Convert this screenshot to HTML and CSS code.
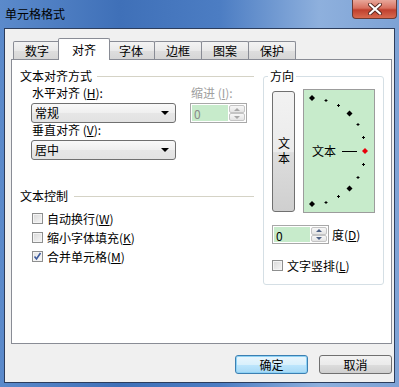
FILE: index.html
```html
<!DOCTYPE html>
<html lang="zh-CN">
<head>
    <meta charset="UTF-8">
    <title>单元格格式</title>
    <link rel="stylesheet" href="styles.css">
</head>
<body>
<div class="window">
    <div class="titlebar">
        <span class="title">单元格格式</span>
        <span class="close">
            <svg width="14" height="12" viewBox="0 0 14 12">
                <path d="M2 1.5 L12 10.5 M12 1.5 L2 10.5" stroke="#5a2a22" stroke-width="4" stroke-linecap="round"/>
                <path d="M2 1.5 L12 10.5 M12 1.5 L2 10.5" stroke="#fff" stroke-width="2.2" stroke-linecap="round"/>
            </svg>
        </span>
    </div>

    <div class="client">
        <div class="tabs">
            <span class="tab">数字</span>
            <span class="tab active">对齐</span>
            <span class="tab">字体</span>
            <span class="tab">边框</span>
            <span class="tab">图案</span>
            <span class="tab">保护</span>
        </div>

        <div class="panel">
            <div class="left">
                <div class="section"><span>文本对齐方式</span><i class="rule"></i></div>
                <div class="align-block">
                    <div class="col-main">
                        <div class="lbl">水平对齐 (<u>H</u>):</div>
                        <div class="select">常规<i class="arrow"></i></div>
                        <div class="lbl lbl-2">垂直对齐 (<u>V</u>):</div>
                        <div class="select">居中<i class="arrow"></i></div>
                    </div>
                    <div class="col-indent">
                        <div class="lbl disabled">缩进 (<u>I</u>):</div>
                        <div class="spin disabled">
                            <span class="spin-val">0</span>
                            <span class="spin-btns"><i class="up"></i><i class="down"></i></span>
                        </div>
                    </div>
                </div>

                <div class="section section-2"><span>文本控制</span><i class="rule"></i></div>
                <div class="checks">
                    <label class="check"><span class="box"></span>自动换行(<u>W</u>)</label>
                    <label class="check"><span class="box"></span>缩小字体填充(<u>K</u>)</label>
                    <label class="check"><span class="box checked">
                        <svg width="9" height="9" viewBox="0 0 9 9"><path d="M1.5 4.5 L3.5 7 L7.5 1" fill="none" stroke="#3d5a9c" stroke-width="1.6"/></svg>
                    </span>合并单元格(<u>M</u>)</label>
                </div>
            </div>

            <fieldset class="orient">
                <legend>方向</legend>
                <div class="orient-top">
                    <div class="vbtn"><span class="vtext">文本</span></div>
                    <svg class="dial" width="70" height="122" viewBox="0 0 70 122">
                        <polygon points="8,5 11,8 8,11 5,8"/>
                        <path d="M20.5 10.5h3M22 9v3 M33 15.5h3M34.5 14v3 M52.5 34.5h3M54 33v3 M58 47.5h3M59.5 46v3 M58 74.5h3M59.5 73v3 M52.5 87.5h3M54 86v3 M33 106.5h3M34.5 105v3 M20.5 112.5h3M22 111v3" stroke="#000" stroke-width="1"/>
                        <polygon points="45.5,20.5 48.5,23.5 45.5,26.5 42.5,23.5"/>
                        <polygon points="45.5,95.5 48.5,98.5 45.5,101.5 42.5,98.5"/>
                        <polygon points="8,111 11,114 8,117 5,114"/>
                        <polygon points="61,58 64,61 61,64 58,61" fill="#e8000b"/>
                        <text x="8" y="65.5" font-size="12">文本</text>
                        <path d="M38 61.5h15" stroke="#000" stroke-width="1"/>
                    </svg>
                </div>
                <div class="deg-row">
                    <div class="spin">
                        <span class="spin-val">0</span>
                        <span class="spin-btns"><i class="up"></i><i class="down"></i></span>
                    </div>
                    <span class="deg-lbl">度(<u>D</u>)</span>
                </div>
                <label class="check vert"><span class="box"></span>文字竖排(<u>L</u>)</label>
            </fieldset>
        </div>

        <div class="buttons">
            <button class="btn default">确定</button>
            <button class="btn">取消</button>
        </div>
    </div>
</div>
</body>
</html>
```

FILE: styles.css
```css
body { margin: 0; font-family: "Noto Sans CJK SC", "Liberation Sans", sans-serif; font-size: 12px; color: #000; }
u { text-decoration: underline; }

.window { width: 399px; height: 387px; box-sizing: border-box; padding: 0 4px 4px 4px; display: flex; flex-direction: column;
    background: linear-gradient(to right, #5b8acb 0%, #3f70b8 30%, #4c7dc3 55%, #8eb0dd 80%, #7da2d5 100%); }

.titlebar { height: 28px; display: flex; justify-content: space-between; align-items: flex-start; flex: none; }
.title { margin: 8px 0 0 1px; line-height: 12px; }
.close { width: 45px; height: 19px; margin-right: -2px; display: flex; align-items: center; justify-content: center;
    border: 1px solid #6b3a34; border-top: none; border-radius: 0 0 4px 4px; box-sizing: border-box;
    background: linear-gradient(#e8a79a, #d8705f 45%, #c0402e 55%, #d86a4f); }

.client { flex: 1; background: #f0f0f0; border: 1px solid #2c3d5c; display: flex; flex-direction: column; }

.tabs { display: flex; align-items: flex-end; height: 22px; margin: 9px 0 -1px 8px; position: relative; z-index: 1; }
.tab { width: 48px; height: 18px; margin: 0 0 1px -1px; box-sizing: border-box; text-align: center; line-height: 17px;
    border: 1px solid #898c95; border-bottom: none; border-radius: 2px 2px 0 0;
    background: linear-gradient(#f3f3f3, #e9e9e9 50%, #dedede 51%, #d6d6d6); }
.tab:first-child { margin-left: 0; }
.tab.active { width: 52px; height: 22px; margin: 0 -2px 0 -3px; padding-top: 2px; background: #fff; position: relative; }

.panel { height: 285px; margin: 0 2px 0 6px; box-sizing: border-box; border: 1px solid #898c95; background: #fff; display: flex; }

.left { width: 242px; box-sizing: border-box; padding: 10px 0 0 8px; }
.section { display: flex; align-items: center; line-height: 12px; height: 12px; }
.section .rule { flex: 1; height: 1px; background: #d5d3c6; margin-left: 5px; }
.section-2 { margin-top: 30px; }
.section-2 .rule { margin-left: 6px; }

.align-block { display: flex; padding-left: 11px; }
.col-main { width: 145px; }
.col-indent { width: 57px; margin-left: 14px; }
.lbl { line-height: 12px; margin-top: 5px; padding-left: 1px; white-space: nowrap; }
.lbl-2 { margin-top: 1px; }
.lbl.disabled { color: #a0a0a0; }

.select { height: 20px; margin-top: 4px; box-sizing: border-box; border: 1px solid #707070; border-radius: 3px; padding-left: 3px;
    line-height: 18px; position: relative; display: flex; align-items: center; justify-content: space-between;
    background: linear-gradient(#f9f9f9, #efefef 50%, #e6e6e6 51%, #e2e2e2); }
.arrow { width: 0; height: 0; margin-right: 6px; border-left: 4px solid transparent; border-right: 4px solid transparent; border-top: 4px solid #000; }

.spin { width: 57px; height: 20px; margin-top: 4px; box-sizing: border-box; border: 1px solid #a8a8a8; display: flex; background: #fff; }
.spin-val { flex: 1; background: #c7ebcb; padding-left: 2px; line-height: 18px; margin: 1px 0 1px 1px; }
.spin.disabled .spin-val { color: #8a8a8a; }
.spin-btns { width: 16px; display: flex; flex-direction: column; margin: 1px 1px 1px 1px; }
.spin-btns i { flex: 1; display: flex; align-items: center; justify-content: center; border: 1px solid #c4c4c4; border-radius: 2px;
    background: linear-gradient(#f7f7f7, #e4e4e4); }
.spin-btns i::after { content: ""; width: 0; height: 0; border-left: 3px solid transparent; border-right: 3px solid transparent; }
.spin-btns .up::after { border-bottom: 3px solid #4d6185; }
.spin-btns .down::after { border-top: 3px solid #4d6185; }
.spin.disabled .spin-btns .up::after { border-bottom-color: #a8a8a8; }
.spin.disabled .spin-btns .down::after { border-top-color: #a8a8a8; }

.checks { margin-top: 7px; padding-left: 12px; }
.check { display: flex; align-items: center; height: 19px; line-height: 12px; white-space: nowrap; }
.box { width: 11px; height: 11px; box-sizing: border-box; margin-right: 4px; border: 1px solid #8e8f8f; display: flex; align-items: center; justify-content: center;
    background: linear-gradient(135deg, #d8d8d8, #f6f6f6); box-shadow: inset 0 0 0 1px #f4f4f4; }
.box.checked { background: linear-gradient(135deg, #e2e2e2, #fbfbfb); }

.orient { width: 121px; height: 215px; margin: 10px 0 0 9px; padding: 7px 0 0 8px; box-sizing: border-box; border: 1px solid #d5dfe5; border-radius: 3px; }
.orient legend { padding: 0 2px; margin-left: -4px; line-height: 12px; }
.orient-top { display: flex; align-items: flex-start; }
.vbtn { width: 23px; height: 121px; margin-top: 2px; box-sizing: border-box; border: 1px solid #707070; border-radius: 3px;
    display: flex; align-items: center; justify-content: center;
    background: linear-gradient(#f2f2f2, #ebebeb 50%, #dddddd 51%, #cfcfcf); }
.vtext { writing-mode: vertical-rl; text-orientation: upright; letter-spacing: 3px; line-height: 12px; margin-top: 1px; }
.dial { margin-left: 8px; border: 1px solid #9c9c9c; background: #c7ebcb; }

.deg-row { display: flex; align-items: center; margin-top: 12px; }
.deg-row .spin { margin-top: 0; height: 19px; }
.deg-row .spin-val { line-height: 17px; }
.deg-lbl { margin-left: 3px; }
.check.vert { margin-top: 12px; }

.buttons { display: flex; justify-content: flex-end; gap: 11px; margin: 11px 2px 0 0; }
.btn { width: 73px; height: 19px; padding: 0; font: inherit; line-height: 17px; border-radius: 3px; border: 1px solid #707070;
    background: linear-gradient(#f2f2f2, #ebebeb 50%, #dddddd 51%, #cfcfcf); }
.btn.default { border-color: #3c7fb1; background: linear-gradient(#eaf6fd, #d9f0fc 50%, #bee6fd 51%, #a7d9f5); box-shadow: inset 0 0 0 1px #8ed2f5; }
```
